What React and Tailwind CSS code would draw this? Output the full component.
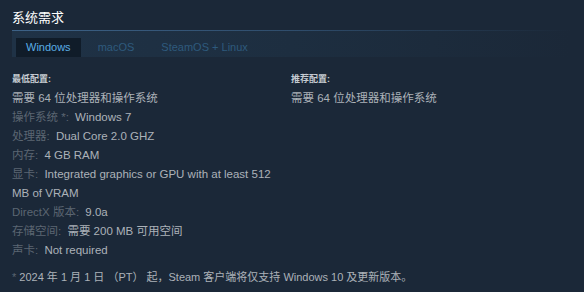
const cjk = { fontFamily: '"Liberation Sans", "Noto Sans CJK SC", sans-serif' };

const minRows = [
  { label: "操作系统 *:", value: "Windows 7" },
  { label: "处理器:", value: "Dual Core 2.0 GHZ" },
  { label: "内存:", value: "4 GB RAM" },
  { label: "显卡:", value: "Integrated graphics or GPU with at least 512 MB of VRAM" },
  { label: "DirectX 版本:", value: "9.0a" },
  { label: "存储空间:", value: "需要 200 MB 可用空间" },
  { label: "声卡:", value: "Not required" },
];

const tabs = ["Windows", "macOS", "SteamOS + Linux"];

export default function App() {
  return (
    <div className="w-[584px] h-[292px] bg-[#1b2838] overflow-hidden" style={cjk}>
      <div className="px-3 pt-[10px]">
        <h2 className="text-[13px] leading-4 text-white font-normal">系统需求</h2>
        <div className="mt-[4px] h-px bg-gradient-to-r from-[#3d6287] via-[#2f4d6c] to-transparent" />
        <div className="h-[26px] pt-[7px] pl-1 flex gap-[7px] bg-gradient-to-r from-[#1f3246] via-[#1d2e40] to-transparent">
          {tabs.map((t, i) => (
            <div
              key={t}
              className={`h-[19px] px-[10px] text-[11px] leading-[19px] ${
                i === 0 ? "bg-[#101c29] text-[#5aaee6]" : "text-[#2e5a7d]"
              }`}
            >
              {t}
            </div>
          ))}
        </div>
      </div>

      <div className="px-3 mt-[16px] flex">
        <div className="w-[279px] pr-[10px]">
          <div className="text-[9px] leading-[12px] font-bold text-[#c6ccd2]">最低配置:</div>
          <div className="mt-[4px] text-[11.5px] leading-[19px] text-[#acb2b8]">
            <div>需要 64 位处理器和操作系统</div>
            {minRows.map((r) => (
              <div key={r.label}>
                <span className="text-[#5b6672] mr-[3px]">{r.label}</span>{" "}
                <span>{r.value}</span>
              </div>
            ))}
          </div>
        </div>
        <div className="flex-1">
          <div className="text-[9px] leading-[12px] font-bold text-[#c6ccd2]">推荐配置:</div>
          <div className="mt-[4px] text-[11.5px] leading-[19px] text-[#acb2b8]">
            <div>需要 64 位处理器和操作系统</div>
          </div>
        </div>
      </div>

      <div className="px-3 mt-[8px] text-[11px] leading-[19px] text-[#acb2b8]">
        <span className="text-[#5b6672]">*</span> 2024 年 1 月 1 日 （PT） 起，Steam 客户端将仅支持 Windows 10 及更新版本。
      </div>
    </div>
  );
}
